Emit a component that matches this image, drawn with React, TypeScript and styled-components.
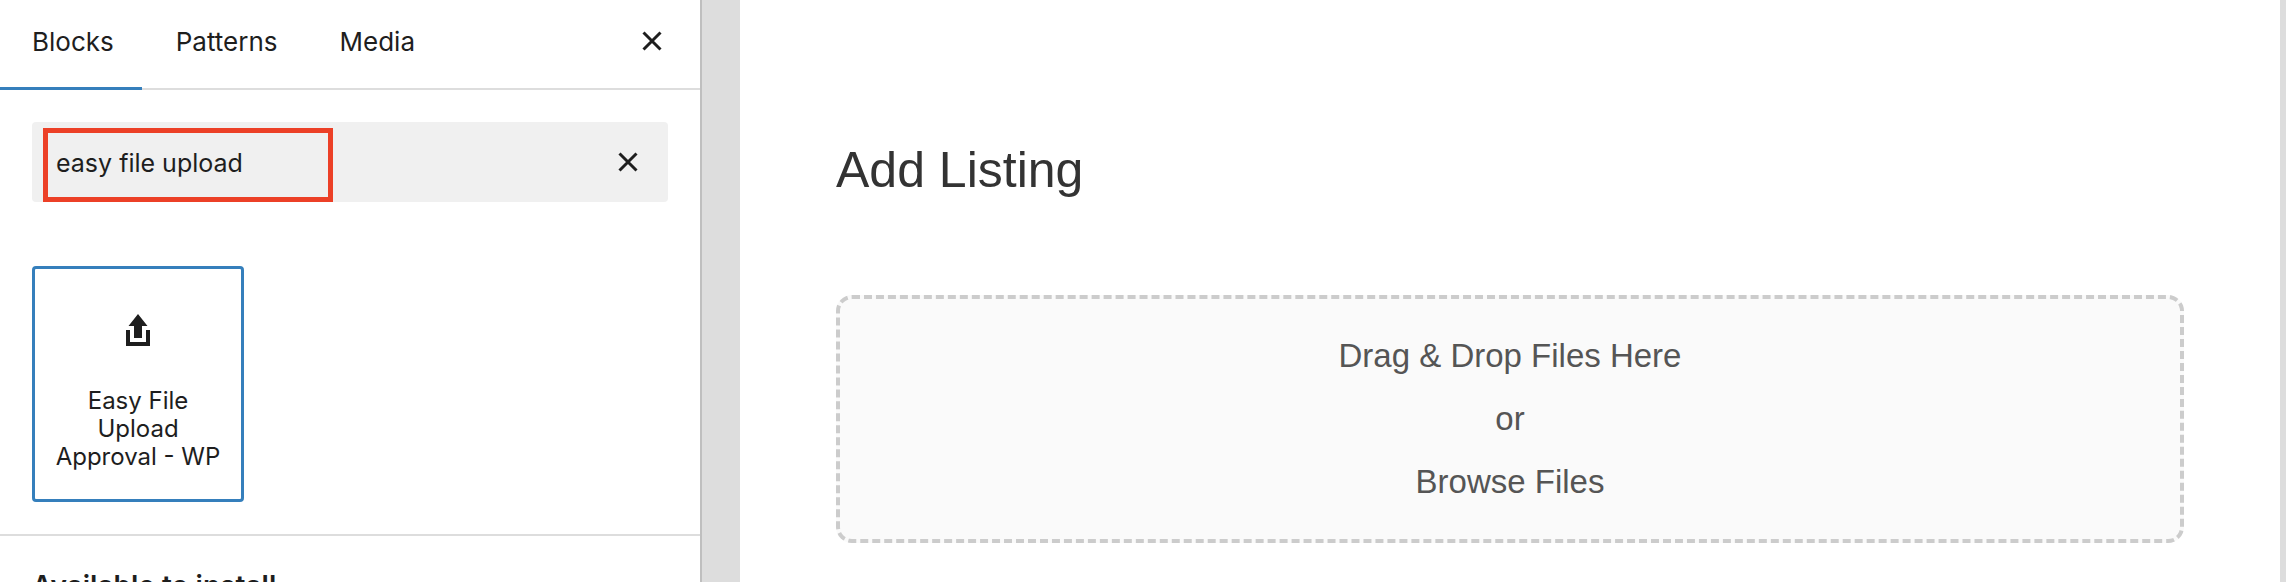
import React, { useState } from "react";
import styled, { createGlobalStyle } from "styled-components";

const GlobalStyle = createGlobalStyle`
  *, *::before, *::after { box-sizing: border-box; }
  body { margin: 0; background: #fff; }
  button, input { font: inherit; color: inherit; }
`;

const Editor = styled.div`
  display: flex;
  height: 100vh;
  overflow: hidden;
  background: #ddd;
`;

const Inserter = styled.aside`
  flex: 0 0 702px;
  overflow: hidden;
  border-right: 2px solid #bfbfbf;
  background: #fff;
  color: #1e1e1e;
  font-family: Inter, "Liberation Sans", sans-serif;
  font-size: 25px;
  line-height: 32px;
`;

const InserterHeader = styled.header`
  display: flex;
  align-items: stretch;
  justify-content: space-between;
  height: 90px;
  padding-right: 28px;
  box-shadow: inset 0 -2px #ddd;
`;

const TabList = styled.div`
  display: flex;
  gap: 2px;
`;

const Tab = styled.button<{ $active: boolean }>`
  padding: 0 28px 4px 32px;
  border: 0;
  border-bottom: 3px solid ${(p) => (p.$active ? "#357fbc" : "transparent")};
  background: none;
  font-size: 26px;
  cursor: pointer;
`;

const IconButton = styled.button`
  display: flex;
  align-items: center;
  justify-content: center;
  width: 40px;
  padding: 0;
  border: 0;
  background: none;
  cursor: pointer;
`;

const HeaderClose = styled(IconButton)`
  padding-bottom: 8px;
`;

const InserterBody = styled.div`
  padding: 32px 32px 0;
`;

const SearchField = styled.div`
  position: relative;
  display: flex;
  height: 80px;
  padding: 0 20px 0 24px;
  border-radius: 4px;
  background: #f0f0f0;
`;

const SearchInput = styled.input`
  flex: 1;
  min-width: 0;
  padding: 2px 0 0;
  border: 0;
  outline: 0;
  background: none;
`;

const Highlight = styled.span`
  position: absolute;
  top: 6px;
  bottom: 0;
  left: 11px;
  width: 290px;
  border: 5px solid #ec4027;
  pointer-events: none;
`;

const BlockGrid = styled.div`
  display: grid;
  grid-template-columns: repeat(3, 1fr);
  padding: 64px 0 32px;
`;

const BlockCard = styled.button`
  display: flex;
  flex-direction: column;
  align-items: center;
  height: 236px;
  padding: 40px 16px 0;
  border: 3px solid #357fbc;
  border-radius: 4px;
  background: #fff;
  font-size: 24px;
  line-height: 28px;
  cursor: pointer;
`;

const BlockIcon = styled.svg`
  flex: none;
  margin-bottom: 38px;
`;

const InstallSection = styled.section`
  padding: 34px 32px;
  border-top: 2px solid #ddd;
`;

const InstallTitle = styled.h2`
  margin: 0;
  font-size: 28px;
  font-weight: 600;
  line-height: 32px;
`;

const Canvas = styled.main`
  flex: 1;
  min-width: 0;
  margin: 0 6px 0 38px;
  padding: 138px 96px 0;
  background: #fff;
  font-family: "Liberation Sans", Arial, sans-serif;
`;

const PageTitle = styled.h1`
  margin: 0 0 93px;
  color: #333;
  font-size: 50px;
  font-weight: 400;
  line-height: 64px;
`;

const DropZone = styled.section`
  display: flex;
  flex-direction: column;
  align-items: center;
  padding: 25px 24px 26px;
  border: 4px dashed #ccc;
  border-radius: 16px;
  background: #fafafa;
  color: #555;
  font-size: 33px;
  line-height: 63px;
`;

const DropText = styled.p`
  margin: 0;
`;

const BrowseButton = styled.button`
  padding: 0;
  border: 0;
  background: none;
  cursor: pointer;
`;

const CloseIcon = () => (
  <svg width="20" height="20" viewBox="0 0 20 20" fill="none" stroke="#1e1e1e" strokeWidth="3" aria-hidden="true">
    <path d="M1.5 1.5 18.5 18.5M18.5 1.5 1.5 18.5" />
  </svg>
);

const UploadIcon = () => (
  <BlockIcon width="40" height="40" viewBox="0 0 40 40" fill="#1e1e1e" aria-hidden="true">
    <path d="M20 5 29.500 17H24V29H16V17H10.500Z" />
    <path d="M8 21H12V33H28V21H32V37H8Z" />
  </BlockIcon>
);

const tabs = ["Blocks", "Patterns", "Media"];

export default function App() {
  const [active, setActive] = useState("Blocks");
  const [query, setQuery] = useState("easy file upload");

  return (
    <>
      <GlobalStyle />
      <Editor>
        <Inserter aria-label="Block library">
          <InserterHeader>
            <TabList role="tablist">
              {tabs.map((tab) => (
                <Tab
                  key={tab}
                  role="tab"
                  aria-selected={tab === active}
                  $active={tab === active}
                  onClick={() => setActive(tab)}
                >
                  {tab}
                </Tab>
              ))}
            </TabList>
            <HeaderClose aria-label="Close block inserter">
              <CloseIcon />
            </HeaderClose>
          </InserterHeader>
          <InserterBody>
            <SearchField>
              <SearchInput
                type="text"
                aria-label="Search for blocks and patterns"
                value={query}
                onChange={(e) => setQuery(e.target.value)}
              />
              <IconButton aria-label="Reset search" onClick={() => setQuery("")}>
                <CloseIcon />
              </IconButton>
              <Highlight />
            </SearchField>
            <BlockGrid>
              <BlockCard>
                <UploadIcon />
                <span>Easy File Upload Approval - WP</span>
              </BlockCard>
            </BlockGrid>
          </InserterBody>
          <InstallSection>
            <InstallTitle>Available to install</InstallTitle>
          </InstallSection>
        </Inserter>
        <Canvas>
          <PageTitle>Add Listing</PageTitle>
          <DropZone aria-label="File upload">
            <DropText>Drag &amp; Drop Files Here</DropText>
            <DropText>or</DropText>
            <BrowseButton>Browse Files</BrowseButton>
          </DropZone>
        </Canvas>
      </Editor>
    </>
  );
}
